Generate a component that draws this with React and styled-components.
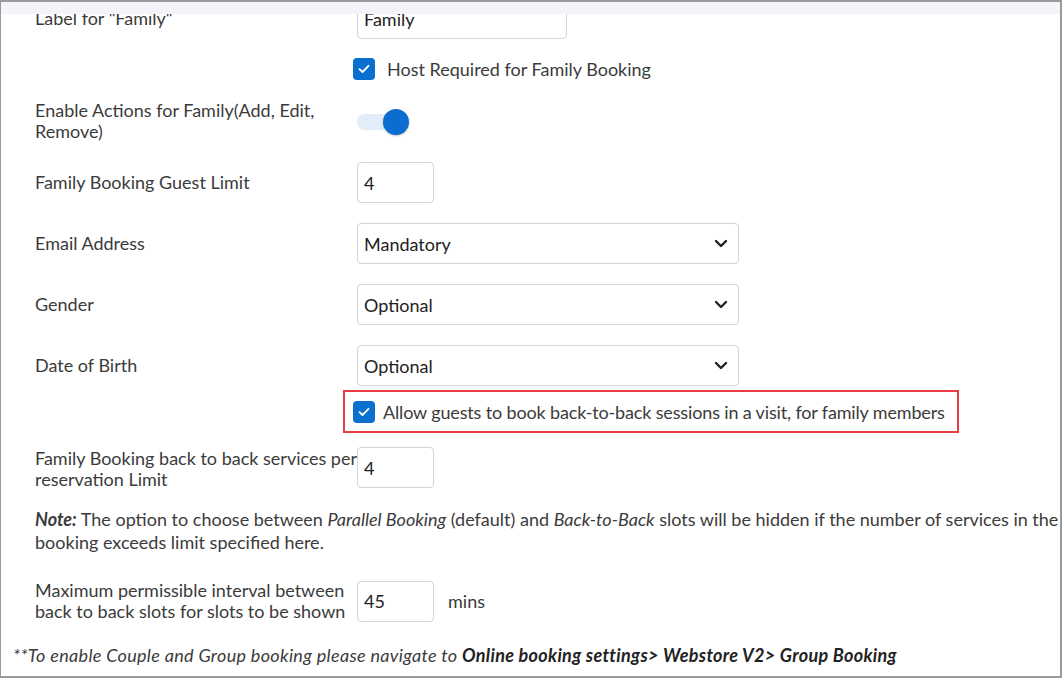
import React from "react";
import styled, { createGlobalStyle } from "styled-components";

const GlobalStyle = createGlobalStyle`
  html, body {
    margin: 0;
    padding: 0;
    background: #fff;
  }
  body {
    font-family: Lato, "Open Sans", sans-serif;
    color: #3b3b3b;
  }
`;

const Frame = styled.div`
  width: 1062px;
  height: 678px;
  box-sizing: border-box;
  border: 1px solid #9a9a9a;
  border-top-width: 2px;
  border-right-width: 2px;
  border-bottom-width: 2px;
  display: flex;
  flex-direction: column;
  overflow: hidden;
  background: #fff;
`;

const TopStrip = styled.div`
  height: 12px;
  flex: none;
  background: #f3f4f9;
  position: relative;
  z-index: 1;
`;

const Scroller = styled.div`
  flex: 1;
  overflow: hidden;
`;

const Content = styled.div`
  margin-top: -16px;
  padding: 0 0 0 34px;
`;

const Row = styled.div`
  display: grid;
  grid-template-columns: 322px 1fr;
  align-items: ${(p) => (p.top ? "start" : "center")};
  min-height: ${(p) => p.h ?? 40}px;
  margin-bottom: ${(p) => p.gap ?? 20}px;
`;

const Label = styled.div`
  font-size: 18px;
  line-height: 21px;
  color: #3b3b3b;
  padding-top: ${(p) => p.pt ?? 0}px;
`;

const Control = styled.div`
  display: flex;
  align-items: center;
  gap: 14px;
  margin-left: ${(p) => p.shift ?? 0}px;
`;

const TextInput = styled.div`
  box-sizing: border-box;
  width: ${(p) => p.w}px;
  height: 41px;
  border: 1px solid #d4d4d4;
  border-radius: 4px;
  padding: 0 6px;
  display: flex;
  align-items: center;
  font-size: 18px;
  color: #222;
  background: #fff;
`;

const Select = styled(TextInput)`
  width: 382px;
  justify-content: space-between;
  padding-right: 10px;
`;

const CheckRow = styled.label`
  display: flex;
  align-items: center;
  gap: 12px;
  font-size: 18px;
  color: #3b3b3b;
`;

const Box = styled.span`
  width: 22px;
  height: 22px;
  border-radius: 4px;
  background: #0b6fd0;
  display: flex;
  align-items: center;
  justify-content: center;
  flex: none;
`;

const Highlight = styled.div`
  box-sizing: border-box;
  width: 616px;
  height: 43px;
  margin-left: -14px;
  border: 2px solid #ea3d43;
  display: flex;
  align-items: center;
  padding-left: 8px;

  ${CheckRow} {
    gap: 8px;
    letter-spacing: -0.15px;
  }
`;

const Toggle = styled.span`
  position: relative;
  display: inline-block;
  width: 46px;
  height: 16px;
  border-radius: 8px;
  background: #e2edf9;
  margin-top: 2px;

  &::after {
    content: "";
    position: absolute;
    right: -6px;
    top: -5px;
    width: 26px;
    height: 26px;
    border-radius: 50%;
    background: #0b6dcf;
    box-shadow: 0 1px 2px rgba(0, 0, 0, 0.25);
  }
`;

const Unit = styled.span`
  font-size: 18px;
  color: #3b3b3b;
`;

const Note = styled.p`
  margin: 18px 0 26px 0;
  font-size: 18px;
  line-height: 23px;
  color: #3b3b3b;
  white-space: nowrap;

  b {
    font-style: italic;
    font-weight: 700;
  }
`;

const Footer = styled.p`
  margin: 22px 0 0 -22px;
  font-size: 18px;
  font-style: italic;
  color: #3b3b3b;
  letter-spacing: 0.32px;
  white-space: nowrap;

  b {
    font-weight: 700;
    color: #222;
  }
`;

const Check = () => (
  <Box>
    <svg width="12" height="10" viewBox="0 0 12 10">
      <path d="M1.5 5.2 L4.5 8 L10.5 1.8" fill="none" stroke="#fff" strokeWidth="1.8" strokeLinecap="round" strokeLinejoin="round" />
    </svg>
  </Box>
);

const Chevron = () => (
  <svg width="14" height="9" viewBox="0 0 14 9">
    <path d="M2 2 L7 7 L12 2" fill="none" stroke="#222" strokeWidth="2.4" strokeLinecap="round" strokeLinejoin="round" />
  </svg>
);

export default function App() {
  return (
    <>
      <GlobalStyle />
      <Frame>
        <TopStrip />
        <Scroller>
          <Content>
            <Row gap={19}>
              <Label>Label for "Family"</Label>
              <Control>
                <TextInput w={210}>Family</TextInput>
              </Control>
            </Row>
            <Row gap={20} h={22}>
              <div />
              <Control shift={-4}>
                <CheckRow>
                  <Check />
                  Host Required for Family Booking
                </CheckRow>
              </Control>
            </Row>
            <Row gap={20}>
              <Label>Enable Actions for Family(Add, Edit, Remove)</Label>
              <Control>
                <Toggle />
              </Control>
            </Row>
            <Row>
              <Label>Family Booking Guest Limit</Label>
              <Control>
                <TextInput w={77}>4</TextInput>
              </Control>
            </Row>
            <Row>
              <Label>Email Address</Label>
              <Control>
                <Select>
                  Mandatory
                  <Chevron />
                </Select>
              </Control>
            </Row>
            <Row>
              <Label>Gender</Label>
              <Control>
                <Select>
                  Optional
                  <Chevron />
                </Select>
              </Control>
            </Row>
            <Row gap={4}>
              <Label>Date of Birth</Label>
              <Control>
                <Select>
                  Optional
                  <Chevron />
                </Select>
              </Control>
            </Row>
            <Row gap={14} h={43}>
              <div />
              <Highlight>
                <CheckRow>
                  <Check />
                  Allow guests to book back-to-back sessions in a visit, for family members
                </CheckRow>
              </Highlight>
            </Row>
            <Row top gap={0}>
              <Label pt={1}>Family Booking back to back services per reservation Limit</Label>
              <Control>
                <TextInput w={77}>4</TextInput>
              </Control>
            </Row>
            <Note>
              <b>Note:</b> The option to choose between <i>Parallel Booking</i> (default) and <i>Back-to-Back</i> slots will be hidden if the number of services in the
              <br />
              booking exceeds limit specified here.
            </Note>
            <Row gap={0}>
              <Label>Maximum permissible interval between back to back slots for slots to be shown</Label>
              <Control>
                <TextInput w={77}>45</TextInput>
                <Unit>mins</Unit>
              </Control>
            </Row>
            <Footer>
              **To enable Couple and Group booking please navigate to <b>Online booking settings&gt; Webstore V2&gt; Group Booking</b>
            </Footer>
          </Content>
        </Scroller>
      </Frame>
    </>
  );
}
